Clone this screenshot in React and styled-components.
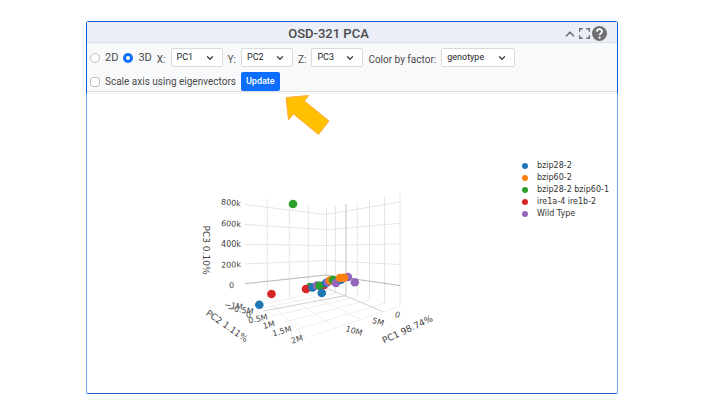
import React from "react";
import styled, { createGlobalStyle } from "styled-components";
import { ChevronDown, ChevronUp } from "lucide-react";

const GlobalStyle = createGlobalStyle`
  * { box-sizing: border-box; }
  body {
    margin: 0;
    background: #fff;
    color: #4a4a4a;
    font-family: Roboto, "Liberation Sans", sans-serif;
    font-size: 10px;
  }
`;

const Page = styled.main`
  padding: 21px 102px 11px 86px;
`;

const Panel = styled.section`
  position: relative;
  border-radius: 3px;
`;

const PanelTop = styled.div`
  padding-bottom: 2px;
  background: #f8f9fb;
  border: 1px solid #0b5bd3;
  border-bottom: 0;
  border-radius: 3px 3px 0 0;
`;

const TitleBar = styled.header`
  display: flex;
  align-items: center;
  height: 21px;
  padding: 3px 10px 0 7px;
  background: #ebeef6;
  border-bottom: 1px solid #dcdee2;
`;

const Title = styled.h1`
  flex: 1;
  margin: 0;
  text-align: center;
  font-size: 13px;
  line-height: 16px;
  font-weight: 500;
`;

const Tools = styled.div`
  display: flex;
  align-items: center;
  gap: 2px;
`;

const IconButton = styled.button`
  display: flex;
  padding: 0;
  border: 0;
  background: none;
  color: #6f7073;
`;

const Controls = styled.form`
  display: grid;
  gap: 5px;
  padding: 5px 3px 0;
  border-bottom: 1px solid #dcdee2;
`;

const ControlRow = styled.div`
  display: flex;
  align-items: center;
  height: 19px;
`;

const Choice = styled.label`
  display: flex;
  align-items: center;
  gap: 5px;
  margin-right: 5px;
  padding-top: 1px;
  font-size: ${(p) => (p.$large ? "11px" : "10px")};
  line-height: 18px;
`;

const Radio = styled.input`
  appearance: none;
  width: 10px;
  height: 10px;
  margin: 0;
  border: 1px solid #bfc1c4;
  border-radius: 50%;
  background: #fff;
  &:checked {
    border: 3px solid #0d6efd;
  }
`;

const Checkbox = styled.input`
  appearance: none;
  width: 10px;
  height: 10px;
  margin: 0;
  border: 1px solid #bfc1c4;
  border-radius: 3px;
  background: #fff;
`;

const Field = styled.label`
  display: flex;
  align-items: center;
  gap: 5px;
  margin-right: 5px;
  span {
    padding-top: 4px;
    line-height: 16px;
  }
`;

const SelectBox = styled.div`
  display: grid;
  align-items: center;
  width: ${(p) => (p.$wide ? "74px" : "52px")};
  > * {
    grid-area: 1 / 1;
  }
  svg {
    justify-self: end;
    margin-right: 8px;
    color: #3c4043;
    pointer-events: none;
  }
`;

const Select = styled.select`
  appearance: none;
  width: 100%;
  height: 19px;
  padding: 0 5px;
  border: 1px solid #d9dbde;
  border-radius: 2px;
  background: #fff;
  color: #212529;
  font: 9px/17px Roboto, "Liberation Sans", sans-serif;
`;

const UpdateButton = styled.button`
  height: 19px;
  padding: 0 5px;
  border: 0;
  border-radius: 2px;
  background: #0d6efd;
  color: #fff;
  font: 500 9px/19px Roboto, "Liberation Sans", sans-serif;
`;

const Body = styled.div`
  display: grid;
  grid-template-columns: 1fr 100px;
  border: 1px solid #73a7ea;
  border-top: 0;
  border-bottom-color: #1c60c2;
  border-radius: 0 0 2px 2px;
`;

const Plot = styled.svg`
  display: block;
  width: 100%;
  height: auto;
  font-family: "DejaVu Sans", sans-serif;
  fill: #444;
`;

const Legend = styled.ul`
  margin: 66px 0 0;
  padding: 0;
  list-style: none;
  font: 8px/12px "DejaVu Sans", sans-serif;
  color: #333;
`;

const LegendItem = styled.li`
  display: flex;
  align-items: center;
  gap: 9px;
  height: 12px;
  white-space: nowrap;
  &::before {
    content: "";
    flex: none;
    width: 6px;
    height: 6px;
    margin-left: 5px;
    border-radius: 50%;
    background: ${(p) => p.$color};
  }
`;

const Pointer = styled.svg`
  position: absolute;
  left: 198px;
  top: 72px;
  pointer-events: none;
`;

const BLUE = "#1f77b4";
const ORANGE = "#ff7f0e";
const GREEN = "#2ca02c";
const RED = "#d62728";
const PURPLE = "#9467bd";

const legend = [
  ["bzip28-2", BLUE],
  ["bzip60-2", ORANGE],
  ["bzip28-2 bzip60-1", GREEN],
  ["ire1a-4 ire1b-2", RED],
  ["Wild Type", PURPLE],
];

const wallLines = [
  "M245 204.5L326 214.5L400 202",
  "M245 224.5L326 229.8L400 223.3",
  "M245 244.3L326 245.5L400 243.8",
  "M245 264L326 260.5L400 264.5",
  "M267.3 199V300",
  "M289.3 201.5V297",
  "M308.3 206V294",
  "M326.5 208V291",
  "M335.5 206V293",
  "M357.3 202V297",
  "M369.5 200V300",
  "M384.5 197V303",
  "M400 194V306",
];

const floorLines = [
  "M267.3 300L306 338",
  "M289.3 297L335 327",
  "M308.3 294L360 319",
  "M253 306L326.5 291",
  "M258 309L335.5 293",
  "M272 316L357.3 297",
  "M284 322L369.5 300",
  "M298 329L384.5 303",
  "M312 336L400 306",
];

const points = [
  [293, 204, GREEN],
  [271.5, 294, RED],
  [259.3, 304.8, BLUE],
  [310, 287, GREEN],
  [306, 289, RED],
  [312.5, 287.5, BLUE],
  [317, 285.5, PURPLE],
  [324, 285, RED],
  [319.5, 285.8, GREEN],
  [321.8, 293, BLUE],
  [326, 283, BLUE],
  [328, 282, PURPLE],
  [330, 280.5, ORANGE],
  [333, 280, GREEN],
  [336, 283, PURPLE],
  [341, 279.7, BLUE],
  [348, 277, PURPLE],
  [340, 278, ORANGE],
  [344, 277.8, ORANGE],
  [354.8, 282.3, PURPLE],
];

const ticks = [
  ["800k", 231, 203, 5],
  ["600k", 231, 224, 3],
  ["400k", 231, 244, 0],
  ["200k", 231, 265, -2],
  ["0", 231.5, 285.5, -4],
  ["−1M", 233.5, 306, 8],
  ["−0.5M", 240.5, 310, 8],
  ["0", 248.5, 315, -12],
  ["0.5M", 258, 319, -12],
  ["1M", 269, 325, -15],
  ["1.5M", 282, 331.5, -16],
  ["2M", 297, 339.5, -18],
  ["0", 397.5, 315, 18],
  ["5M", 378, 322, 17],
  ["10M", 354, 331, 17],
];

const axisTitles = [
  ["PC3 0.10%", 206, 250, 90],
  ["PC2 1.11%", 227, 326, 35],
  ["PC1 98.74%", 407.5, 329.5, -25],
];

function AxisSelect({ label, name, value, options, wide }) {
  return (
    <Field>
      <span>{label}</span>
      <SelectBox $wide={wide}>
        <Select name={name} defaultValue={value}>
          {options.map((o) => (
            <option key={o}>{o}</option>
          ))}
        </Select>
        <ChevronDown size={10} strokeWidth={3} aria-hidden="true" />
      </SelectBox>
    </Field>
  );
}

function PlotLabel({ item, size }) {
  const [text, x, y, angle] = item;
  return (
    <text
      x={x}
      y={y}
      fontSize={size}
      textAnchor="middle"
      dominantBaseline="central"
      transform={`rotate(${angle} ${x} ${y})`}
    >
      {text}
    </text>
  );
}

function ScatterPlot() {
  return (
    <Plot viewBox="87 94 430 299" role="img" aria-label="3D PCA scatter plot">
      <g fill="none" stroke="#f0f0f0" strokeWidth="1">
        {floorLines.map((d) => (
          <path key={d} d={d} />
        ))}
      </g>
      <g fill="none" stroke="#e6e6e6" strokeWidth="1">
        {wallLines.map((d) => (
          <path key={d} d={d} />
        ))}
      </g>
      <g fill="none" stroke="#a5a5a5" strokeWidth="0.8">
        <path d="M245 283.7L326 275L400 285.5" />
        <path d="M326 288L383 311.5" stroke="#c4c4c4" />
        <path d="M263.5 311L346 295.5" stroke="#c4c4c4" />
        <path d="M346 204V295.5" stroke="#d8d8d8" strokeWidth="1.6" />
      </g>
      {points.map(([x, y, color]) => (
        <circle key={`${x}-${y}`} cx={x} cy={y} r="4.3" fill={color} />
      ))}
      {ticks.map((t) => (
        <PlotLabel key={`${t[0]}-${t[1]}`} item={t} size={8} />
      ))}
      {axisTitles.map((t) => (
        <PlotLabel key={t[0]} item={t} size={9} />
      ))}
    </Plot>
  );
}

export default function App() {
  const components = ["PC1", "PC2", "PC3"];
  return (
    <Page>
      <GlobalStyle />
      <Panel>
        <PanelTop>
          <TitleBar>
            <Title>OSD-321 PCA</Title>
            <Tools>
              <IconButton aria-label="Collapse">
                <ChevronUp size={14} strokeWidth={3} />
              </IconButton>
              <IconButton aria-label="Full screen">
                <svg width="11" height="11" viewBox="0 0 11 11" fill="none" stroke="currentColor" strokeWidth="1.4">
                  <path d="M0.7 3.7V0.7H3.7M7.3 0.7H10.3V3.7M10.3 7.3V10.3H7.3M3.7 10.3H0.7V7.3" />
                </svg>
              </IconButton>
              <IconButton aria-label="Help">
                <svg width="15" height="15" viewBox="0 0 14 14">
                  <circle cx="7" cy="7" r="7" fill="currentColor" />
                  <path
                    d="M4.6 5.4C4.6 2.2 9.5 2.3 9.4 5.2C9.3 6.8 7.1 6.9 7.1 8.7"
                    fill="none"
                    stroke="#fff"
                    strokeWidth="1.6"
                  />
                  <circle cx="7.1" cy="10.8" r="1" fill="#fff" />
                </svg>
              </IconButton>
            </Tools>
          </TitleBar>
          <Controls onSubmit={(e) => e.preventDefault()}>
            <ControlRow>
              <Choice $large>
                <Radio type="radio" name="dim" value="2d" />
                2D
              </Choice>
              <Choice $large>
                <Radio type="radio" name="dim" value="3d" defaultChecked />
                3D
              </Choice>
              <AxisSelect label="X:" name="x" value="PC1" options={components} />
              <AxisSelect label="Y:" name="y" value="PC2" options={components} />
              <AxisSelect label="Z:" name="z" value="PC3" options={components} />
              <AxisSelect label="Color by factor:" name="factor" value="genotype" options={["genotype"]} wide />
            </ControlRow>
            <ControlRow>
              <Choice>
                <Checkbox type="checkbox" name="scale" />
                Scale axis using eigenvectors
              </Choice>
              <UpdateButton type="submit">Update</UpdateButton>
            </ControlRow>
          </Controls>
        </PanelTop>
        <Body>
          <ScatterPlot />
          <Legend>
            {legend.map(([name, color]) => (
              <LegendItem key={name} $color={color}>
                {name}
              </LegendItem>
            ))}
          </Legend>
        </Body>
        <Pointer width="48" height="44" viewBox="284 93 48 44" aria-hidden="true">
          <path
            d="M286 97.5L308.5 95.5L304.5 101L329 121L318.5 134.5L293.5 114L288.5 120Z"
            fill="#ffc000"
            stroke="#ffab40"
            strokeWidth="1"
          />
        </Pointer>
      </Panel>
    </Page>
  );
}
